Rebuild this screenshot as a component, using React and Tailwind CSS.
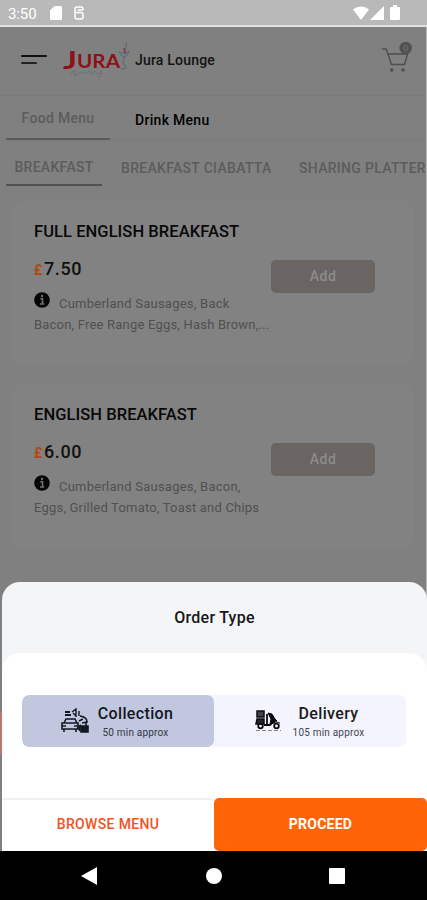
import React from "react";

const items = [
  {
    name: "FULL ENGLISH BREAKFAST",
    price: "7.50",
    lines: ["Cumberland Sausages, Back", "Bacon, Free Range Eggs, Hash Brown,..."],
  },
  {
    name: "ENGLISH BREAKFAST",
    price: "6.00",
    lines: ["Cumberland Sausages, Bacon,", "Eggs, Grilled Tomato, Toast and Chips"],
  },
];

function StatusBar() {
  return (
    <div className="flex h-[27px] items-center justify-between border-b-2 border-[#e2e2e2] bg-[#b9b9b9] pl-2 pr-[27px] text-white">
      <div className="flex items-center">
        <span className="w-[29px] whitespace-nowrap pt-[3px] text-[15px] leading-none tracking-[-0.1px]">3:50</span>
        <svg className="ml-[13px] h-[14px] w-[12px]" viewBox="0 0 12 14" fill="currentColor">
          <path d="M4.500 0H10.500Q12 0 12 1.500V12.500Q12 14 10.500 14H1.500Q0 14 0 12.500V4.500Z" />
        </svg>
        <svg className="ml-[12px] h-[14px] w-[10px]" viewBox="0 0 10 14" fill="none" stroke="currentColor" strokeWidth="1.500">
          <path d="M9 4V3Q9 1 7 1H3Q1 1 1 3V5Q1 6.600 3 6.600H7Q9 6.600 9 8.600V11Q9 13 7 13H3Q1 13 1 11V3M3.500 4H9" />
        </svg>
      </div>
      <div className="flex items-center">
        <svg className="h-[14px] w-[16px]" viewBox="0 0 16 14" fill="currentColor">
          <path d="M0 3.600Q3.500 .4 8 .4T16 3.600L8 14Z" />
        </svg>
        <svg className="ml-[1px] h-[14px] w-[14px]" viewBox="0 0 14 14" fill="currentColor">
          <path d="M14 0V14H0Z" />
        </svg>
        <svg className="ml-[6px] h-[15px] w-[10px]" viewBox="0 0 10 15" fill="currentColor">
          <path d="M3 0H7V2H8.800Q10 2 10 3.200V13.800Q10 15 8.800 15H1.200Q0 15 0 13.800V3.200Q0 2 1.200 2H3Z" />
        </svg>
      </div>
    </div>
  );
}

function Logo() {
  return (
    <svg className="h-[40px] w-[68px]" viewBox="0 0 68 40">
      <text x="0" y="29.500" fill="#8d1118" fontFamily="Lato, sans-serif" fontWeight="700" fontSize="25" textLength="14" lengthAdjust="spacingAndGlyphs">J</text>
      <text x="14" y="29" fill="#8d1118" fontFamily="Lato, sans-serif" fontWeight="700" fontSize="19" textLength="43" lengthAdjust="spacingAndGlyphs">URA</text>
      <g fill="none" stroke="#4b6672" strokeWidth=".9">
        <path d="M63.500 3L62 15M56 13Q61 16 66 12M57 15Q62 22 66 12M62 18Q58 23 62 26Q65 30 58 30" />
        <path d="M7 35Q14 29 12 34Q9 38 15 35Q21 31 21 35Q25 33 27 32Q28 38 32 32Q34 38 38 32Q40 39 34 38" opacity=".55" />
      </g>
      <path d="M61 9l1 5" stroke="#8d3a40" strokeWidth="1.500" />
    </svg>
  );
}

function Header() {
  return (
    <div className="flex h-[69px] items-center border-b border-[#7a7a7a] pl-[21px]">
      <div className="-mt-[4px] flex w-[26px] flex-col gap-[5px]">
        <span className="h-[2px] w-[26px] rounded bg-[#111]" />
        <span className="h-[2px] w-[16px] rounded bg-[#222]" />
      </div>
      <div className="ml-[16px] self-start pt-[12px]">
        <Logo />
      </div>
      <span className="ml-[4px] -mt-[2px] w-[83px] whitespace-nowrap text-[14px] font-medium tracking-[0.2px] text-[#131313]">Jura Lounge</span>
      <svg className="-mt-[9px] ml-[163px] h-[34px] w-[34px]" viewBox="0 0 34 34" fill="none" stroke="#4d4d4d" strokeWidth="1.400">
        <path d="M1.500 9H5.200L10.500 24.500H23.500L26.500 14H7" strokeLinejoin="round" strokeLinecap="round" />
        <circle cx="10.700" cy="30" r="1.700" fill="#4d4d4d" stroke="none" />
        <circle cx="22" cy="30" r="1.700" fill="#4d4d4d" stroke="none" />
        <circle cx="24.700" cy="8" r="6.300" fill="#535353" stroke="none" />
        <ellipse cx="24.700" cy="8" rx="1.800" ry="2.600" stroke="#707070" strokeWidth="1" />
      </svg>
    </div>
  );
}

function MenuTabs() {
  return (
    <div className="flex h-[45px] border-b border-[#7a7a7a] pl-[6px] text-[14px] font-medium">
      <div className="flex w-[104px] items-center justify-center border-b-2 border-[#5b5b5b] pt-[2px] tracking-[0.3px] text-[#5c5c5c]">Food Menu</div>
      <div className="ml-[25px] flex items-center pt-[4px] tracking-[0.3px] text-black">Drink Menu</div>
    </div>
  );
}

function Categories() {
  return (
    <div className="flex h-[60px] items-start overflow-hidden whitespace-nowrap pl-[6px] text-[14px] font-medium text-[#5c5c5c]">
      <div className="flex h-[45px] w-[96px] shrink-0 items-center justify-center border-b-2 border-[#525252] pt-[10px] tracking-[0.3px]">BREAKFAST</div>
      <div className="ml-[19px] flex h-[45px] w-[152px] shrink-0 items-center pt-[10px] tracking-[0.3px]">BREAKFAST CIABATTA</div>
      <div className="ml-[26px] flex h-[45px] shrink-0 items-center pt-[10px] tracking-[0.3px]">SHARING PLATTER</div>
    </div>
  );
}

function InfoIcon() {
  return (
    <svg className="mt-[1px] h-4 w-4 shrink-0" viewBox="0 0 16 16">
      <circle cx="8" cy="8" r="7.800" fill="#050505" />
      <path d="M6.300 6.700H8.500V12M6 12H10.300" stroke="#707070" strokeWidth="1.600" fill="none" />
      <circle cx="8" cy="4" r="1.200" fill="#707070" />
    </svg>
  );
}

function MenuCard({ item }) {
  return (
    <div className="flex h-[165px] w-[402px] rounded-xl bg-[#828282] pl-[22px] pt-[21px]">
      <div className="w-[237px] whitespace-nowrap">
        <h2 className="text-[16.5px] font-medium leading-5 tracking-[0.07px] text-[#080808]">{item.name}</h2>
        <div className="mt-[17px] flex h-5 items-baseline leading-5">
          <span className="w-[10px] text-[14px] font-bold text-[#b34713]">£</span>
          <span className="text-[18px] font-medium tracking-[0.6px] text-[#111]">{item.price}</span>
        </div>
        <div className="mt-[12px] flex text-[13px] text-[#505050]">
          <InfoIcon />
          <span className="ml-[9px] mt-[3px] leading-[20px] tracking-[0.24px]">{item.lines[0]}</span>
        </div>
        <p className="mt-[1px] text-[13px] leading-[20px] tracking-[0.2px] text-[#505050]">{item.lines[1]}</p>
      </div>
      <button className="mt-[38px] h-[33px] w-[104px] rounded-[5px] bg-[#6a6463] text-[14px] font-medium tracking-[0.5px] text-[#8e8c8b]">Add</button>
    </div>
  );
}

function CollectionIcon() {
  return (
    <svg className="h-[26px] w-[28px]" viewBox="0 0 28 26" fill="none" stroke="#151821" strokeWidth="1.600">
      <path d="M4 4H9M4 7H10" strokeWidth="2" />
      <path d="M11 4L15 1V9M18 3V8M12 5L15 8" strokeWidth="1.400" />
      <path d="M3 15L5 11H14L16 15M1 15H17V21H1ZM3 21V24M15 21V24M1 18H5M13 18H17" />
      <path d="M19 8Q26 9 26 14L21 15M18 13L22 11M25 14V18" />
      <path d="M20 18H27V24H20ZM20 17L17 19L19 23" fill="#151821" />
    </svg>
  );
}

function DeliveryIcon() {
  return (
    <svg className="h-[24px] w-[26px]" viewBox="0 0 26 24" fill="none" stroke="#0c0c10" strokeWidth="1.800">
      <path d="M2 2H9V8H2Z" fill="#42424a" strokeWidth="1.500" />
      <path d="M2 10H9V15H1Z" fill="#24242a" strokeWidth="1.500" />
      <path d="M9 16H15L17 14M12 5V15" />
      <path d="M13 4L17 5L20 10L22 12L19 14L15 15L16 10Z" fill="#0c0c10" strokeWidth="1" />
      <circle cx="5.500" cy="17" r="2.300" />
      <circle cx="21.500" cy="17" r="2.300" />
      <path d="M20 13L25 14" stroke="#55555d" strokeWidth="1.300" />
      <path d="M1 21.500H26" stroke="#85858d" strokeWidth="1" strokeDasharray="4 2" />
    </svg>
  );
}

function OrderSheet() {
  return (
    <div className="absolute bottom-[49px] left-0 flex h-[269px] w-[427px] flex-col pl-[2px]">
      <div className="flex flex-1 flex-col overflow-hidden rounded-t-[18px] bg-[#f3f5f7]">
        <div className="flex h-[71px] items-center justify-center text-[16px] font-medium tracking-[0.25px] text-[#171717]">
          Order Type
        </div>
        <div className="flex flex-1 flex-col rounded-t-[18px] bg-white">
          <div className="ml-[20px] mt-[42px] flex h-[52px] w-[384px] overflow-hidden rounded-[7px] bg-[#f3f4fd]">
            <div className="flex w-[192px] items-center rounded-[7px] bg-[#c0c7df] pl-[39px]">
              <CollectionIcon />
              <div className="ml-[4px] flex w-[85px] flex-col items-center whitespace-nowrap pt-[2px]">
                <span className="text-[16px] font-medium leading-5 tracking-[0.35px] text-[#16181f]">Collection</span>
                <span className="text-[10px] leading-[17px] tracking-[0.2px] text-[#353945]">50 min approx</span>
              </div>
            </div>
            <div className="flex flex-1 items-center pl-[41px]">
              <DeliveryIcon />
              <div className="ml-[5px] flex w-[85px] flex-col items-center whitespace-nowrap pt-[2px]">
                <span className="text-[16px] font-medium leading-5 tracking-[0.35px] text-[#1b1b20]">Delivery</span>
                <span className="text-[10px] leading-[17px] tracking-[0.2px] text-[#454550]">105 min approx</span>
              </div>
            </div>
          </div>
          <div className="mt-auto flex h-[53px] text-[14px]">
            <button className="w-[212px] border-t-2 border-[#f0f0f0] pb-[2px] font-medium tracking-[0.35px] text-[#f4511e]">BROWSE MENU</button>
            <button className="flex-1 rounded-[5px] bg-[#ff6408] font-bold tracking-[0.25px] text-white">PROCEED</button>
          </div>
        </div>
      </div>
    </div>
  );
}

function NavBar() {
  return (
    <div className="absolute bottom-0 left-0 flex h-[49px] w-full items-center bg-black pl-[81px]">
      <svg className="h-[18px] w-[16px]" viewBox="0 0 16 18" fill="white">
        <path d="M16 0V18L0 9Z" />
      </svg>
      <span className="ml-[109px] h-4 w-4 rounded-full bg-white" />
      <span className="ml-[107px] h-4 w-4 rounded-[1px] bg-white" />
    </div>
  );
}

export default function App() {
  return (
    <div className="relative h-[900px] w-[427px] overflow-hidden bg-[#b9b9b9] font-[Roboto,sans-serif]">
      <StatusBar />
      <div className="h-[824px] w-[426px] bg-[#808080]">
        <Header />
        <MenuTabs />
        <Categories />
        <div className="flex flex-col gap-[18px] pl-[12px]">
          {items.map((item) => (
            <MenuCard key={item.name} item={item} />
          ))}
        </div>
        <div className="mt-[163px] h-[42px] w-[12px] bg-[#b87870]" />
      </div>
      <OrderSheet />
      <NavBar />
    </div>
  );
}
